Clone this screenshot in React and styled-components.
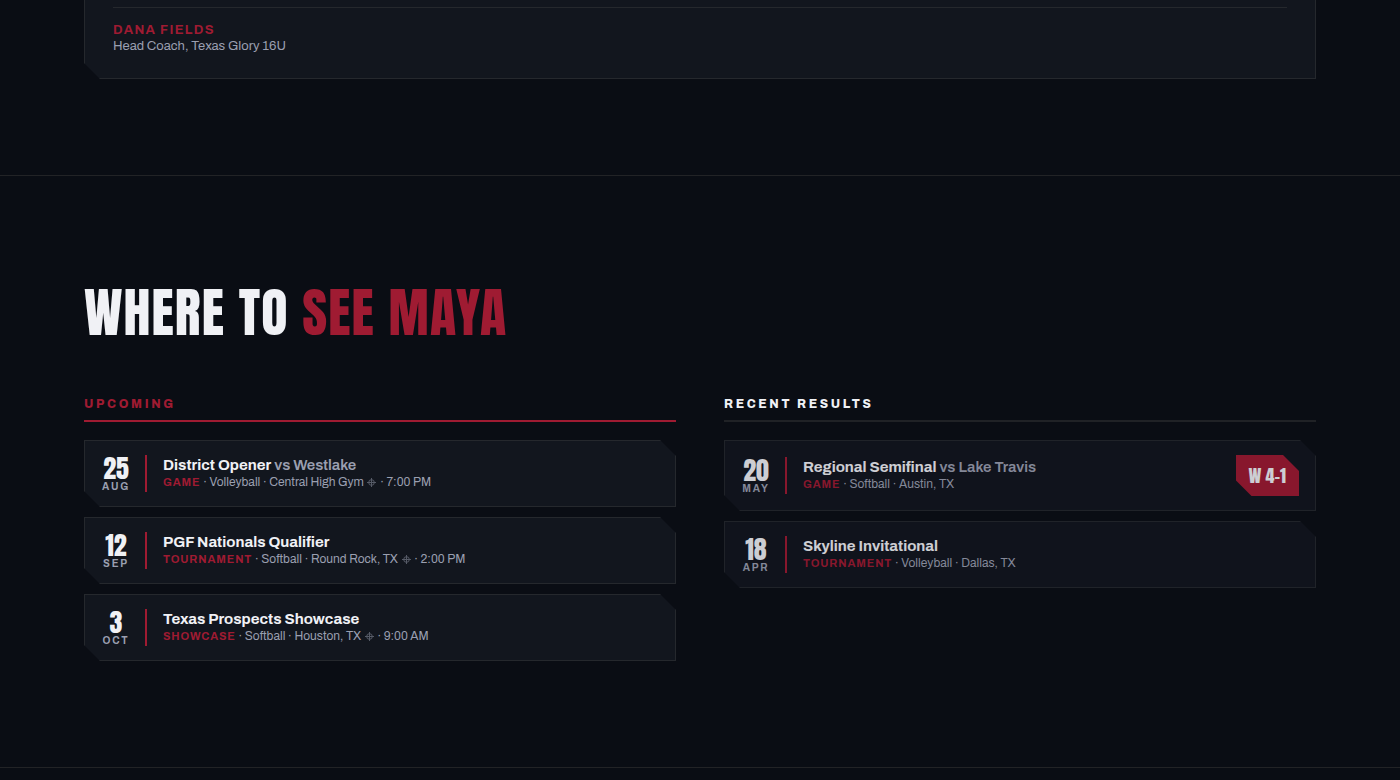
import React from 'react';
import styled, { createGlobalStyle, css } from 'styled-components';

const GlobalStyle = createGlobalStyle`
  :root {
    --bg: #0a0d14;
    --card: #12161e;
    --border: #25282d;
    --section-border: #222326;
    --accent: #9f1b32;
    --text: #f0f1f5;
    --muted: #9a9fb0;
    --cut: 16px;
  }

  * {
    box-sizing: border-box;
  }

  body {
    margin: 0;
    background: var(--bg);
    color: var(--text);
    font-family: Archivo, 'Liberation Sans', sans-serif;
    font-size: 16px;
    line-height: 24px;
  }
`;

const Section = styled.section`
  padding: ${(p) => (p.$flush ? '0 0 96px' : '96px 0')};
  border-bottom: 1px solid var(--section-border);
`;

const Container = styled.div`
  max-width: 1280px;
  margin: 0 auto;
  padding: 0 24px;
`;

const cutCorners = css`
  clip-path: polygon(
    0 0,
    calc(100% - var(--cut)) 0,
    100% var(--cut),
    100% 100%,
    var(--cut) 100%,
    0 calc(100% - var(--cut))
  );
`;

const QuoteCard = styled.figure`
  margin: 0;
  padding: 7px 28px 24px;
  background: var(--card);
  border: 1px solid var(--border);
  border-top: 0;
  clip-path: polygon(0 0, 100% 0, 100% 100%, var(--cut) 100%, 0 calc(100% - var(--cut)));
`;

const QuoteFooter = styled.figcaption`
  padding-top: 14px;
  border-top: 1px solid var(--border);
`;

const QuoteAuthor = styled.div`
  color: var(--accent);
  font-size: 13px;
  font-weight: 700;
  line-height: 16px;
  letter-spacing: 0.1em;
  text-transform: uppercase;
`;

const QuoteRole = styled.div`
  color: var(--muted);
  font-size: 13px;
  line-height: 16px;
`;

const Title = styled.h2`
  margin: 0 0 42px;
  font-family: Anton, Impact, sans-serif;
  font-size: 54px;
  font-weight: 400;
  line-height: 80px;
  letter-spacing: 0.02em;
  text-transform: uppercase;

  span {
    color: var(--accent);
  }
`;

const Columns = styled.div`
  display: grid;
  grid-template-columns: 1fr 1fr;
  gap: 48px;

  @media (max-width: 860px) {
    grid-template-columns: 1fr;
  }
`;

const ColumnTitle = styled.h3`
  margin: 0 0 18px;
  padding-bottom: 6px;
  border-bottom: 2px solid ${(p) => (p.$accent ? 'var(--accent)' : '#202226')};
  color: ${(p) => (p.$accent ? 'var(--accent)' : 'var(--text)')};
  font-size: 12px;
  font-weight: 800;
  line-height: 20px;
  letter-spacing: 0.22em;
  text-transform: uppercase;
`;

const EventCard = styled.article`
  display: flex;
  align-items: center;
  gap: 16px;
  margin-bottom: 10px;
  padding: 14px 16px;
  background: var(--card);
  border: 1px solid var(--border);
  opacity: ${(p) => (p.$past ? 0.85 : 1)};
  ${cutCorners}
`;

const EventDate = styled.time`
  min-width: 46px;
  padding-right: 14px;
  border-right: 2px solid var(--accent);
  text-align: center;
`;

const Day = styled.div`
  font-family: Anton, Impact, sans-serif;
  font-size: 26px;
  line-height: 26px;
`;

const Month = styled.div`
  color: var(--muted);
  font-size: 10px;
  font-weight: 700;
  line-height: 11px;
  letter-spacing: 0.18em;
  text-transform: uppercase;
`;

const EventBody = styled.div`
  flex: 1;
  min-width: 0;
`;

const EventName = styled.div`
  font-size: 15px;
  font-weight: 700;
  line-height: 18px;

  span {
    color: var(--muted);
    font-weight: 600;
  }
`;

const EventMeta = styled.div`
  color: var(--muted);
  font-size: 12px;
  line-height: 17px;
`;

const EventType = styled.span`
  color: var(--accent);
  font-size: 11px;
  font-weight: 700;
  letter-spacing: 0.08em;
  text-transform: uppercase;
`;

const MapLink = styled.a`
  color: var(--muted);
  opacity: 0.5;

  svg {
    width: 11px;
    height: 11px;
    vertical-align: -2px;
  }
`;

const Result = styled.div`
  padding: 6px 13px;
  background: var(--accent);
  font-family: Anton, Impact, sans-serif;
  font-size: 18px;
  line-height: 29px;
  ${cutCorners}
`;

const upcoming = [
  { day: '25', month: 'Aug', name: 'District Opener', opponent: 'Westlake', type: 'Game', sport: 'Volleyball', place: 'Central High Gym', time: '7:00 PM' },
  { day: '12', month: 'Sep', name: 'PGF Nationals Qualifier', type: 'Tournament', sport: 'Softball', place: 'Round Rock, TX', time: '2:00 PM' },
  { day: '3', month: 'Oct', name: 'Texas Prospects Showcase', type: 'Showcase', sport: 'Softball', place: 'Houston, TX', time: '9:00 AM' },
];

const results = [
  { day: '20', month: 'May', name: 'Regional Semifinal', opponent: 'Lake Travis', type: 'Game', sport: 'Softball', place: 'Austin, TX', result: 'W 4-1' },
  { day: '18', month: 'Apr', name: 'Skyline Invitational', type: 'Tournament', sport: 'Volleyball', place: 'Dallas, TX' },
];

const PositionIcon = () => (
  <svg viewBox="0 0 11 11" fill="none" stroke="currentColor" aria-hidden="true">
    <circle cx="5.5" cy="5.5" r="2.8" />
    <path d="M5.5 1v9M1 5.5h9" />
  </svg>
);

const Event = ({ event, past }) => (
  <EventCard $past={past}>
    <EventDate>
      <Day>{event.day}</Day>
      <Month>{event.month}</Month>
    </EventDate>
    <EventBody>
      <EventName>
        {event.name}
        {event.opponent && <span> vs {event.opponent}</span>}
      </EventName>
      <EventMeta>
        <EventType>{event.type}</EventType> · {event.sport} · {event.place}
        {event.time && (
          <>
            {' '}
            <MapLink href="#map">
              <PositionIcon />
            </MapLink>{' '}
            · {event.time}
          </>
        )}
      </EventMeta>
    </EventBody>
    {event.result && <Result>{event.result}</Result>}
  </EventCard>
);

const App = () => (
  <>
    <GlobalStyle />
    <Section $flush>
      <Container>
        <QuoteCard>
          <QuoteFooter>
            <QuoteAuthor>Dana Fields</QuoteAuthor>
            <QuoteRole>Head Coach, Texas Glory 16U</QuoteRole>
          </QuoteFooter>
        </QuoteCard>
      </Container>
    </Section>
    <Section id="schedule">
      <Container>
        <Title>
          Where to <span>see Maya</span>
        </Title>
        <Columns>
          <div>
            <ColumnTitle $accent>Upcoming</ColumnTitle>
            {upcoming.map((event) => (
              <Event key={event.name} event={event} />
            ))}
          </div>
          <div>
            <ColumnTitle>Recent Results</ColumnTitle>
            {results.map((event) => (
              <Event key={event.name} event={event} past />
            ))}
          </div>
        </Columns>
      </Container>
    </Section>
  </>
);

export default App;
